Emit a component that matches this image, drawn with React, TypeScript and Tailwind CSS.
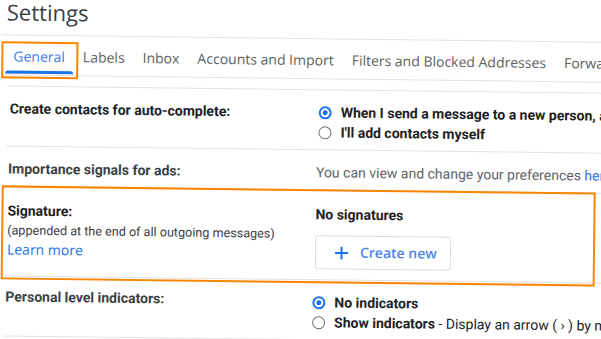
const tabs = ['General', 'Labels', 'Inbox', 'Accounts and Import', 'Filters and Blocked Addresses', 'Forwarding and POP/IMAP']

function Radio({ checked }: { checked?: boolean }) {
  if (checked) {
    return (
      <span className="w-[13px] h-[13px] shrink-0 rounded-full border-2 border-[#1a73e8] flex items-center justify-center">
        <span className="w-[5px] h-[5px] rounded-full bg-[#1a73e8]" />
      </span>
    )
  }
  return <span className="w-[13px] h-[13px] shrink-0 rounded-full border border-[#6f6f6f]" />
}

export default function App() {
  return (
    <div className="w-[601px] h-[339px] overflow-hidden bg-white font-['Roboto',sans-serif] text-[#202124]">
      <div className="relative h-full w-[640px] rotate-[0.7deg] origin-[300px_170px]">
        {/* Header */}
        <div className="h-[39px] pl-[5px] pt-[3px] border-b border-[#e3e3e3]">
          <h1 className="font-['Open_Sans',sans-serif] text-[22px] leading-[24px] text-[#3c4043]">Settings</h1>
        </div>

        {/* Tabs */}
        <div className="flex h-[40px] pl-[4px] gap-[2px] border-b border-[#e3e3e3] font-['Open_Sans',sans-serif] text-[14px] font-medium whitespace-nowrap">
          {tabs.map((t, i) => (
            <div
              key={t}
              className={`relative flex items-center px-2 pt-[2px] ${i === 0 ? 'text-[#3b7de9]' : 'text-[#5b5f63]'}`}
            >
              {t}
              {i === 0 && (
                <>
                  <span className="absolute left-0 right-0 bottom-[1px] h-[3px] rounded-t-[3px] bg-[#1a73e8]" />
                  <span className="absolute -left-[4px] -right-[5px] top-[6px] -bottom-[4px] border-2 border-[#fb8500]" />
                </>
              )}
            </div>
          ))}
        </div>

        {/* Rows */}
        <div className="mt-[10px] ml-[6px] border-t border-[#e3e3e3] text-[14px] leading-[20px] whitespace-nowrap">
          <div className="flex h-[60px] pt-[12px] border-b border-[#e3e3e3]">
            <div className="w-[310px] shrink-0 pl-[3px] font-bold">Create contacts for auto-complete:</div>
            <div className="flex flex-col font-bold">
              <label className="flex items-center gap-[9px] pl-[2px]">
                <Radio checked />
                When I send a message to a new person, add them to Other Contacts
              </label>
              <label className="flex items-center gap-[9px] pl-[2px]">
                <Radio />
                I'll add contacts myself
              </label>
            </div>
          </div>

          <div className="flex h-[40px] pt-[12px] border-b border-[#e3e3e3]">
            <div className="w-[310px] shrink-0 pl-[2px] font-bold text-[#3c4043]">Importance signals for ads:</div>
            <div className="text-[#5f6368]">
              You can view and change your preferences <span className="text-[#1a73e8]">here</span>.
            </div>
          </div>

          <div className="flex h-[90px] pt-[14px] border-b border-[#e3e3e3]">
            <div className="w-[310px] shrink-0 pl-[2px]">
              <div className="font-bold">Signature:</div>
              <div className="text-[12.6px] text-[#3c4043]">(appended at the end of all outgoing messages)</div>
              <div className="font-['Open_Sans',sans-serif] leading-[18px] text-[#1a73e8]">Learn more</div>
            </div>
            <div>
              <div className="font-bold">No signatures</div>
              <button className="mt-[11px] w-[136px] h-[34px] flex items-center gap-[12px] pl-[19px] rounded-[4px] border border-[#dadce0] font-['Open_Sans',sans-serif] font-semibold text-[#4a86e8]">
                <svg width="13" height="13" viewBox="0 0 13 13" fill="none" stroke="#1a73e8" strokeWidth="2">
                  <path d="M6.5 0v13M0 6.5h13" />
                </svg>
                Create new
              </button>
            </div>
          </div>

          <div className="flex h-[60px] pt-[10px] border-b border-[#e3e3e3]">
            <div className="w-[308px] shrink-0 pl-[1px] font-bold text-[#3c4043]">Personal level indicators:</div>
            <div className="flex flex-col pt-[2px]">
              <label className="flex items-center gap-[9px] font-bold">
                <Radio checked />
                No indicators
              </label>
              <label className="flex items-center gap-[9px]">
                <Radio />
                <span>
                  <b>Show indicators</b> - Display an arrow ( › ) by messages sent to my address
                </span>
              </label>
            </div>
          </div>
        </div>

        {/* Highlight around the signature row */}
        <div className="absolute left-[2px] top-[189px] w-[594px] h-[94px] border-2 border-[#fb8500]" />
      </div>
    </div>
  )
}
